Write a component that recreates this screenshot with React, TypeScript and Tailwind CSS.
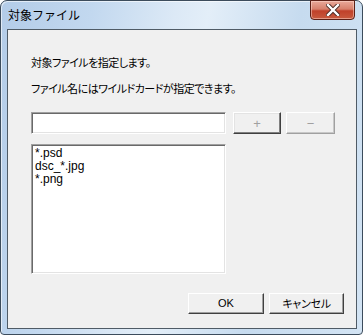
import React from "react";

const jp = { fontFamily: '"Noto Sans CJK JP", "Noto Sans", sans-serif', fontFeatureSettings: '"palt"' };

export default function App() {
  return (
    <div className="w-[363px] h-[335px] overflow-hidden bg-white">
      <div className="relative w-[363px] h-[335px] rounded-t-[7px] rounded-b-[4px] border border-[#3c4c5c] bg-[linear-gradient(100deg,#b3cce8_0%,#c2d8ef_22%,#dce9f6_42%,#e3eef8_50%,#c6dbef_72%,#d3e4f4_100%)] shadow-[inset_1px_1px_0_rgba(255,255,255,0.6)] flex flex-col">
        {/* title bar */}
        <div className="h-[28px] flex items-start pl-[7px] pt-[5px]">
          <span className="text-[12px] leading-[18px] text-black" style={{ fontFamily: '"Noto Sans CJK JP", sans-serif' }}>
            対象ファイル
          </span>
        </div>
        {/* close button */}
        <div className="absolute top-[-1px] right-[7px] w-[45px] h-[20px] rounded-b-[4px] border border-[#5c2016] bg-[linear-gradient(180deg,#e9a99a_0%,#d7806c_45%,#c0412a_55%,#c85a3e_100%)] flex items-center justify-center shadow-[inset_0_0_0_1px_rgba(255,220,210,0.5)]">
          <svg width="14" height="12" viewBox="0 0 14 12">
            <path d="M2 1 L12 11 M12 1 L2 11" stroke="#4a2a24" strokeWidth="4.2" strokeLinecap="square" />
            <path d="M2 1 L12 11 M12 1 L2 11" stroke="#ffffff" strokeWidth="2.4" strokeLinecap="square" />
          </svg>
        </div>
        {/* content panel */}
        <div className="ml-[6px] w-[350px] h-[300px] border border-[#4f5b66] bg-[#f0f0f0] flex flex-col pl-[23px] pr-[12px] pt-[25px]" style={jp}>
          <div className="text-[11px] leading-[15px] tracking-[-0.5px] text-black">対象ファイルを指定します。</div>
          <div className="mt-[11px] text-[11px] leading-[15px] tracking-[-0.5px] text-black">ファイル名にはワイルドカードが指定できます。</div>
          <div className="mt-[16px] flex items-center">
            <div className="w-[195px] h-[22px] bg-white border border-t-[#a0a0a0] border-l-[#a0a0a0] border-b-white border-r-white shadow-[inset_1px_1px_0_#696969,inset_-1px_-1px_0_#e3e3e3]" />
            <div className="ml-[7px] w-[48px] h-[22px] bg-[#f0f0f0] border border-t-white border-l-white border-b-[#404040] border-r-[#404040] shadow-[inset_-1px_-1px_0_#808080,inset_1px_1px_0_#e3e3e3] flex items-center justify-center text-[#a0a0a0] text-[13px] leading-none" style={{ fontFamily: '"Liberation Sans", sans-serif' }}>
              +
            </div>
            <div className="ml-[5px] w-[49px] h-[22px] bg-[#f0f0f0] border border-t-white border-l-white border-b-[#a0a0a0] border-r-[#a0a0a0] shadow-[inset_-1px_-1px_0_#c8c8c8] flex items-center justify-center text-[#a0a0a0] text-[13px] leading-none" style={{ fontFamily: '"Liberation Sans", sans-serif' }}>
              −
            </div>
          </div>
          <div className="mt-[10px] w-[195px] h-[130px] bg-white border border-t-[#a0a0a0] border-l-[#a0a0a0] border-b-white border-r-white shadow-[inset_1px_1px_0_#696969,inset_-1px_-1px_0_#e3e3e3] pl-[3px] pt-[2px] text-[12px] leading-[13px] text-black" style={{ fontFamily: '"Liberation Sans", sans-serif' }}>
            <div>*.psd</div>
            <div>dsc_*.jpg</div>
            <div>*.png</div>
          </div>
          <div className="mt-[19px] flex justify-end">
            <div className="w-[76px] h-[21px] bg-[#f0f0f0] border border-t-white border-l-white border-b-[#404040] border-r-[#404040] shadow-[inset_-1px_-1px_0_#a0a0a0] flex items-center justify-center text-[11px] text-black" style={{ fontFamily: '"Liberation Sans", sans-serif' }}>
              OK
            </div>
            <div className="ml-[5px] w-[75px] h-[21px] bg-[#f0f0f0] border border-t-white border-l-white border-b-[#404040] border-r-[#404040] shadow-[inset_-1px_-1px_0_#a0a0a0] flex items-center justify-center text-[11px] tracking-[-0.3px] text-black" style={jp}>
              キャンセル
            </div>
          </div>
        </div>
      </div>
    </div>
  );
}
